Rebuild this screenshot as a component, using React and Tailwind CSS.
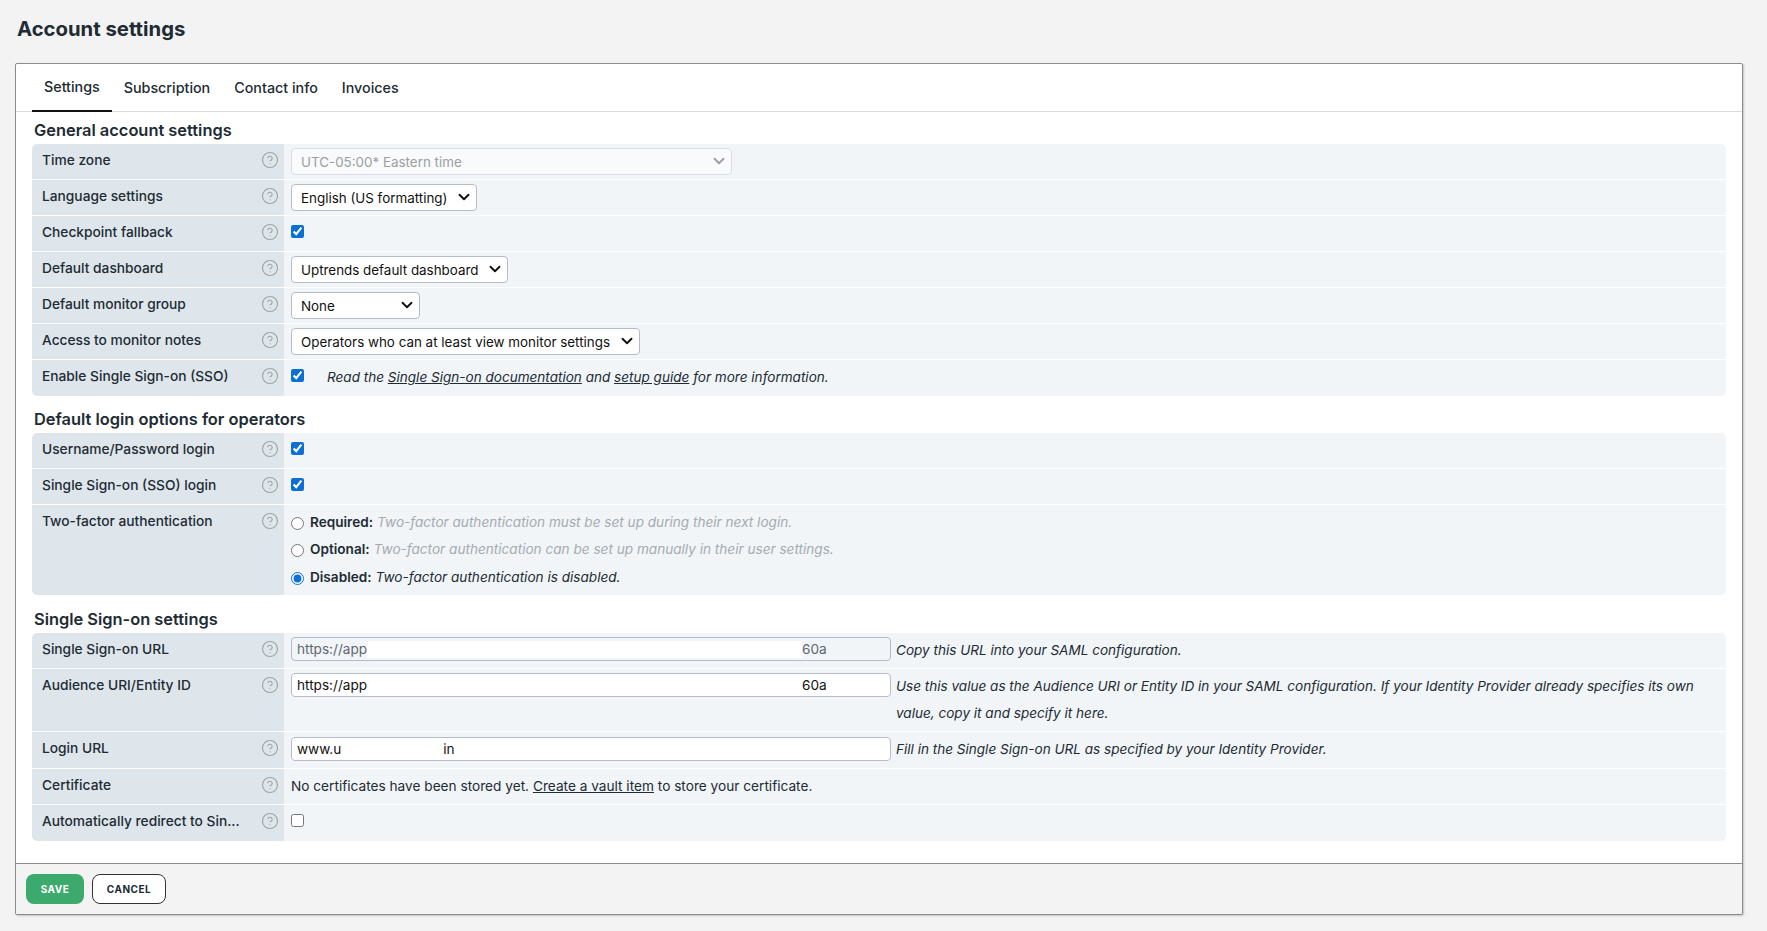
import { ChevronDown, CircleHelp } from 'lucide-react';

const font = 'font-["Inter","Liberation_Sans",sans-serif]';

function Row({ label, children, className = 'h-9' }) {
  return (
    <div className={`flex border-b border-white last:border-b-0 ${className}`}>
      <div className="flex w-[252px] shrink-0 items-start justify-between bg-[#dee6ec] pl-[10px] pr-[5px] pt-[6px] text-[13.75px] font-medium leading-5 text-[#212b33]">
        <span>{label}</span>
        <CircleHelp size={18} strokeWidth={1.5} className="mt-px text-[#9ea3a6]" />
      </div>
      <div className="min-w-0 flex-1 bg-[#f1f5f8] pl-[7px] text-[13.67px] text-[#212b33]">{children}</div>
    </div>
  );
}

function Section({ title, className, children }) {
  return (
    <section className={className}>
      <h2 className="mb-[2px] pl-[2px] text-[16.4px] font-semibold leading-6 text-[#212b33]">{title}</h2>
      <div className="overflow-hidden rounded-[5px]">{children}</div>
    </section>
  );
}

function Select({ width, disabled, options }) {
  return (
    <div className={`relative mt-[4px] h-[27px] ${width}`}>
      <select
        disabled={disabled}
        className="block size-full appearance-none rounded-[4px] border border-[#b4bccb] bg-white pl-[9px] pt-px text-[13.4px] text-[#111] disabled:border-[#d9dee6] disabled:bg-[#f8fafb] disabled:text-[#9a9fa3]"
      >
        {options.map((o) => (
          <option key={o}>{o}</option>
        ))}
      </select>
      <ChevronDown
        size={18}
        strokeWidth={2.5}
        className={`pointer-events-none absolute right-[4px] top-[4px] ${disabled ? 'text-[#9a9fa3]' : 'text-[#111]'}`}
      />
    </div>
  );
}

function Check({ checked }) {
  return <input type="checkbox" defaultChecked={checked} className="mt-[9px] block size-[13px] accent-[#0b6fd6]" />;
}

function Radio({ checked, name, text, muted }) {
  return (
    <label className="flex h-[27.5px] items-center">
      <input type="radio" name="twofactor" defaultChecked={checked} className="mt-[3px] size-[13px] accent-[#0b6fd6]" />
      <b className="ml-[6px] text-[13.6px] font-semibold">{name}</b>
      <i className={`ml-[4px] text-[13.6px] ${muted ? 'text-[#a5abb0]' : ''}`}>{text}</i>
    </label>
  );
}

function Field({ disabled, start, gap, end, className = 'mt-[4px]' }) {
  return (
    <div
      className={`flex h-[24px] w-[600px] shrink-0 items-center rounded-[4px] border border-[#b4bccb] pl-[5px] pt-px text-[13.6px] ${
        disabled ? 'bg-[#f1f5f8] text-[#5f6770]' : 'bg-white text-[#111]'
      } ${className}`}
    >
      <span>{start}</span>
      <span className={`h-[17px] bg-white ${gap}`} />
      <span>{end}</span>
    </div>
  );
}

function Hint({ children }) {
  return <p className="ml-[5px] mt-[4px] text-[13.55px] italic leading-[27px] text-[#212b33]">{children}</p>;
}

export default function App() {
  return (
    <div className={`min-h-[931px] bg-[#f3f3f3] pl-[15px] pr-[24px] ${font}`}>
      <h1 className="pl-[2px] pt-[15px] text-[20.3px] font-bold leading-[28px] text-[#212b33]">Account settings</h1>
      <div className="mt-[20px] overflow-hidden rounded-[2px] border border-[#8c8c8c] bg-white shadow-[1px_1px_2px_rgba(0,0,0,0.2)]">
        <nav className="flex h-[48px] border-b border-[#dcdcdc] pl-[16px] text-[14.3px] font-medium text-[#212b33]">
          <a className="-mb-px flex items-center border-b-2 border-[#111] px-[12px]">Settings</a>
          <a className="flex items-center px-[12px]">Subscription</a>
          <a className="flex items-center px-[12px]">Contact info</a>
          <a className="flex items-center px-[12px]">Invoices</a>
        </nav>

        <div className="px-[16px] pb-[22px] pt-[6px]">
          <Section title="General account settings">
            <Row label="Time zone">
              <Select width="w-[441px]" disabled options={['UTC-05:00* Eastern time']} />
            </Row>
            <Row label="Language settings">
              <Select width="w-[186px]" options={['English (US formatting)']} />
            </Row>
            <Row label="Checkpoint fallback">
              <Check checked />
            </Row>
            <Row label="Default dashboard">
              <Select width="w-[217px]" options={['Uptrends default dashboard']} />
            </Row>
            <Row label="Default monitor group">
              <Select width="w-[129px]" options={['None']} />
            </Row>
            <Row label="Access to monitor notes">
              <Select width="w-[349px]" options={['Operators who can at least view monitor settings']} />
            </Row>
            <Row label="Enable Single Sign-on (SSO)">
              <div className="flex">
                <Check checked />
                <p className="ml-[23px] mt-[7px] text-[13.55px] italic leading-5">
                  Read the <a className="underline">Single Sign-on documentation</a> and{' '}
                  <a className="underline">setup guide</a> for more information.
                </p>
              </div>
            </Row>
          </Section>

          <Section title="Default login options for operators" className="mt-[11px]">
            <Row label="Username/Password login">
              <Check checked />
            </Row>
            <Row label="Single Sign-on (SSO) login">
              <Check checked />
            </Row>
            <Row label="Two-factor authentication" className="h-[90px]">
              <div className="pt-[3px]">
                <Radio name="Required:" muted text="Two-factor authentication must be set up during their next login." />
                <Radio name="Optional:" muted text="Two-factor authentication can be set up manually in their user settings." />
                <Radio checked name="Disabled:" text="Two-factor authentication is disabled." />
              </div>
            </Row>
          </Section>

          <Section title="Single Sign-on settings" className="mt-[12px]">
            <Row label="Single Sign-on URL">
              <div className="flex">
                <Field disabled start="https://app" gap="w-[435px]" end="60a" />
                <Hint>Copy this URL into your SAML configuration.</Hint>
              </div>
            </Row>
            <Row label="Audience URI/Entity ID" className="h-[63px]">
              <div className="flex">
                <Field start="https://app" gap="w-[435px]" end="60a" />
                <Hint>
                  Use this value as the Audience URI or Entity ID in your SAML configuration. If your Identity Provider
                  already specifies its own value, copy it and specify it here.
                </Hint>
              </div>
            </Row>
            <Row label="Login URL" className="h-[37px]">
              <div className="flex">
                <Field start="www.u" gap="w-[102px]" end="in" className="mt-[5px]" />
                <Hint>Fill in the Single Sign-on URL as specified by your Identity Provider.</Hint>
              </div>
            </Row>
            <Row label="Certificate">
              <p className="pt-[7px] leading-5">
                No certificates have been stored yet. <a className="underline">Create a vault item</a> to store your
                certificate.
              </p>
            </Row>
            <Row label="Automatically redirect to Sin...">
              <Check />
            </Row>
          </Section>
        </div>

        <footer className="flex h-[51px] items-center gap-[8px] border-t border-[#8c8c8c] bg-[#f3f3f3] pl-[10px]">
          <button className="h-[30px] w-[58px] rounded-[8px] bg-[#3caa6c] text-[10px] font-bold uppercase tracking-[0.5px] text-white">
            Save
          </button>
          <button className="h-[30px] w-[74px] rounded-[8px] border border-[#333] bg-white text-[10px] font-bold uppercase tracking-[0.5px] text-[#212b33]">
            Cancel
          </button>
        </footer>
      </div>
    </div>
  );
}
